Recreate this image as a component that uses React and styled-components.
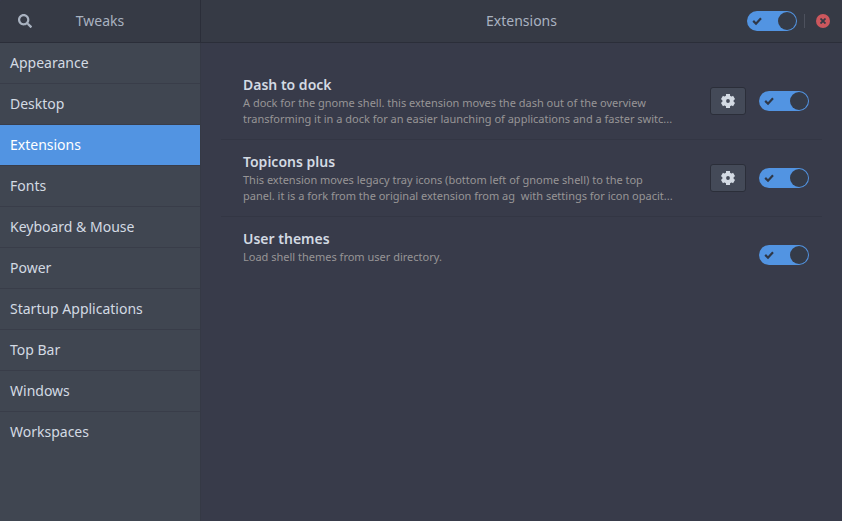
import React, { useState } from 'react';
import styled, { createGlobalStyle } from 'styled-components';
import { FaSearch } from 'react-icons/fa';

const GlobalStyle = createGlobalStyle`
  * { box-sizing: border-box; }
  body {
    margin: 0;
    background: #383b4a;
    color: #d3dae3;
    font: 14px/20px "Noto Sans", sans-serif;
  }
  button, input { font: inherit; color: inherit; margin: 0; padding: 0; }
`;

const Window = styled.div`
  display: grid;
  grid-template-columns: 201px minmax(0, 1fr);
  grid-template-rows: 43px 1fr;
  min-height: 100vh;
  border-radius: 3px 3px 0 0;
  overflow: hidden;
`;

const HeaderBar = styled.header`
  display: grid;
  grid-template-columns: ${(p) => p.$columns};
  align-items: center;
  padding: ${(p) => p.$padding};
  background: #363a45;
  border-bottom: 1px solid #2b2e39;
  border-right: ${(p) => (p.$divided ? '1px solid #2b2e39' : 'none')};
  color: #a9b2c0;
`;

const Title = styled.h1`
  margin: 0;
  font-size: 14px;
  font-weight: 400;
  line-height: 20px;
  text-align: center;
`;

const SearchButton = styled.button`
  display: grid;
  place-items: center;
  width: 34px;
  height: 28px;
  border: 0;
  background: none;
`;

const HeaderControls = styled.div`
  display: flex;
  align-items: center;
  justify-content: flex-end;
`;

const HeaderDivider = styled.span`
  width: 1px;
  height: 14px;
  margin: 0 11px 0 7px;
  background: #4d515d;
`;

const CloseButton = styled.button`
  display: grid;
  place-items: center;
  width: 14px;
  height: 14px;
  border: 0;
  border-radius: 50%;
  background: #cc575d;
  color: #363a45;
`;

const Sidebar = styled.nav`
  background: #404651;
  border-right: 1px solid #353945;
`;

const SidebarLink = styled.a`
  display: block;
  padding: 10px;
  border-bottom: 1px solid ${(p) => (p.$last ? 'transparent' : '#393d49')};
  background: ${(p) => (p.$active ? '#5294e2' : 'transparent')};
  background-clip: padding-box;
  color: ${(p) => (p.$active ? '#ffffff' : '#d3dae3')};
  text-decoration: none;
`;

const Content = styled.main`
  padding: 20px 20px 0;
`;

const ExtensionRow = styled.section`
  display: flex;
  align-items: center;
  gap: 13px;
  min-height: ${(p) => (p.$last ? '76px' : '77px')};
  padding: 0 13px 0 22px;
  border-bottom: ${(p) => (p.$last ? 'none' : '1px solid #333644')};
`;

const Details = styled.div`
  flex: 1;
  min-width: 0;
  align-self: flex-start;
  padding: 12px 0 11px;
`;

const Name = styled.h2`
  margin: 0;
  font-size: 14px;
  font-weight: 600;
  line-height: 20px;
`;

const Description = styled.p`
  margin: 0;
  color: #979596;
  font-size: 11px;
  line-height: 16px;
  white-space: pre-line;
`;

const SettingsButton = styled.button`
  display: grid;
  place-items: center;
  width: 36px;
  height: 28px;
  border: 1px solid #2b2e39;
  border-radius: 3px;
  background: #444a58;
`;

const Switch = styled.label`
  display: grid;
  grid-template-columns: 1fr 18px;
  align-items: center;
  width: 50px;
  height: 20px;
  padding: 1px;
  border-radius: 10px;
  background: ${(p) => (p.$on ? '#5294e2' : '#2b2e39')};
  color: #2f3848;
  cursor: pointer;
`;

const SwitchInput = styled.input`
  grid-area: 1 / 1 / 2 / 3;
  appearance: none;
  width: 48px;
  height: 18px;
  border-radius: 9px;
  cursor: pointer;
`;

const SwitchMark = styled.span`
  grid-area: 1 / 1 / 2 / 2;
  display: ${(p) => (p.$on ? 'flex' : 'none')};
  padding-left: 4px;
  pointer-events: none;
`;

const Knob = styled.span`
  grid-area: 1 / 1 / 2 / 3;
  justify-self: ${(p) => (p.$on ? 'end' : 'start')};
  width: 18px;
  height: 18px;
  border-radius: 50%;
  background: ${(p) => (p.$on ? '#353b48' : '#5c6270')};
  pointer-events: none;
`;

function GearIcon() {
  return (
    <svg width="14" height="14" viewBox="-7 -7 14 14" fill="none" stroke="currentColor" aria-hidden="true">
      <circle r="3.8" strokeWidth="3.8" />
      {[0, 60, 120, 180, 240, 300].map((angle) => (
        <path key={angle} d="M0 -4V-7" strokeWidth="4" transform={`rotate(${angle})`} />
      ))}
    </svg>
  );
}

function Toggle({ label }) {
  const [on, setOn] = useState(true);
  return (
    <Switch $on={on}>
      <SwitchInput
        type="checkbox"
        role="switch"
        aria-label={label}
        checked={on}
        onChange={(e) => setOn(e.target.checked)}
      />
      <SwitchMark $on={on}>
        <svg width="10" height="10" viewBox="0 0 10 10" fill="none" stroke="currentColor" strokeWidth="2.2" aria-hidden="true">
          <path d="M1.2 4.9 4 7.7 9 2.2" />
        </svg>
      </SwitchMark>
      <Knob $on={on} />
    </Switch>
  );
}

const pages = [
  'Appearance',
  'Desktop',
  'Extensions',
  'Fonts',
  'Keyboard & Mouse',
  'Power',
  'Startup Applications',
  'Top Bar',
  'Windows',
  'Workspaces',
];

const extensions = [
  {
    name: 'Dash to dock',
    description:
      'A dock for the gnome shell. this extension moves the dash out of the overview\ntransforming it in a dock for an easier launching of applications and a faster switc...',
    settings: true,
  },
  {
    name: 'Topicons plus',
    description:
      'This extension moves legacy tray icons (bottom left of gnome shell) to the top\npanel. it is a fork from the original extension from ag\u00a0 with settings for icon opacit...',
    settings: true,
  },
  {
    name: 'User themes',
    description: 'Load shell themes from user directory.',
    settings: false,
  },
];

export default function App() {
  const [active, setActive] = useState('Extensions');
  return (
    <>
      <GlobalStyle />
      <Window>
        <HeaderBar $divided $columns="34px 1fr 34px" $padding="0 8px">
          <SearchButton aria-label="Search">
            <FaSearch size={14} />
          </SearchButton>
          <Title as="div">Tweaks</Title>
        </HeaderBar>
        <HeaderBar $columns="92px 1fr 92px" $padding="0 12px">
          <span />
          <Title>{active}</Title>
          <HeaderControls>
            <Toggle label="Enable extensions" />
            <HeaderDivider />
            <CloseButton aria-label="Close">
              <svg width="6" height="6" viewBox="0 0 6 6" stroke="currentColor" strokeWidth="1.8" aria-hidden="true">
                <path d="M0.5 0.5 5.5 5.5M5.5 0.5 0.5 5.5" />
              </svg>
            </CloseButton>
          </HeaderControls>
        </HeaderBar>
        <Sidebar>
          {pages.map((page, i) => (
            <SidebarLink
              key={page}
              href="#"
              $active={page === active}
              $last={i === pages.length - 1}
              aria-current={page === active ? 'page' : undefined}
              onClick={(e) => {
                e.preventDefault();
                setActive(page);
              }}
            >
              {page}
            </SidebarLink>
          ))}
        </Sidebar>
        <Content>
          {extensions.map((ext, i) => (
            <ExtensionRow key={ext.name} $last={i === extensions.length - 1}>
              <Details>
                <Name>{ext.name}</Name>
                <Description>{ext.description}</Description>
              </Details>
              {ext.settings && (
                <SettingsButton aria-label={`${ext.name} settings`}>
                  <GearIcon />
                </SettingsButton>
              )}
              <Toggle label={ext.name} />
            </ExtensionRow>
          ))}
        </Content>
      </Window>
    </>
  );
}
